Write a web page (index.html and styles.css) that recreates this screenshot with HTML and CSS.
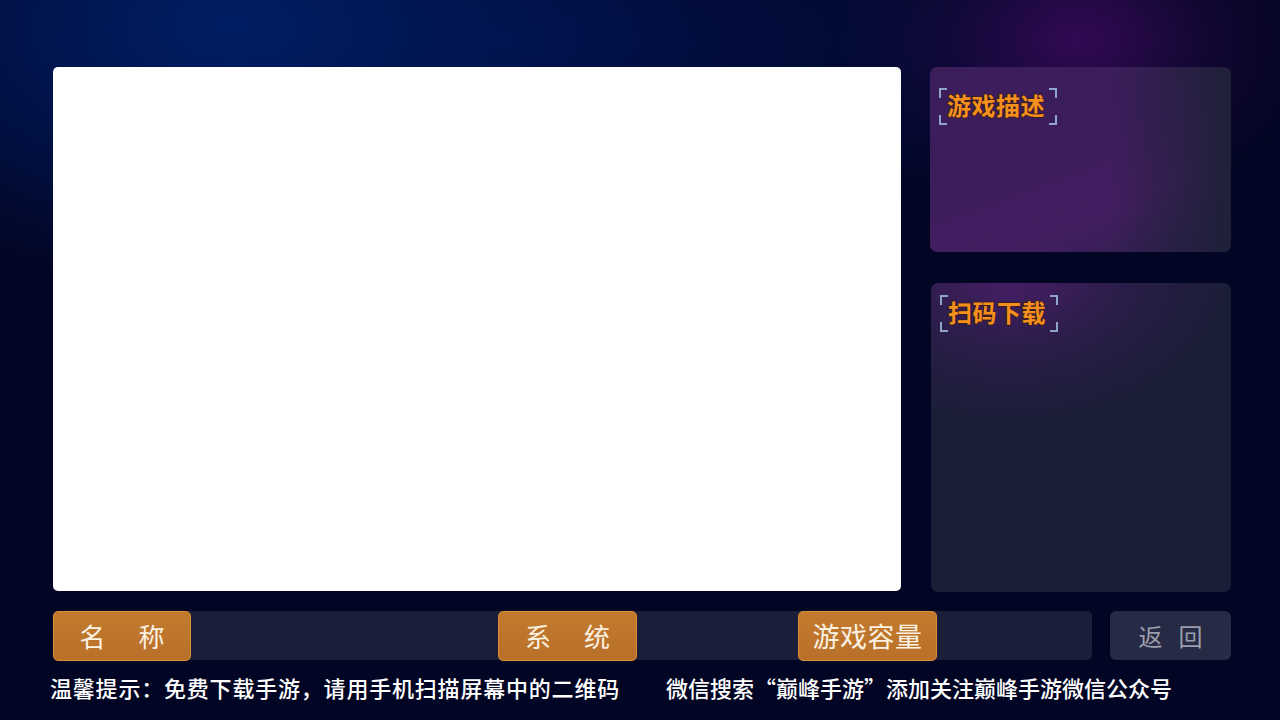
FILE: index.html
```html
<!DOCTYPE html>
<html lang="zh-CN">
<head>
<meta charset="utf-8">
<title>游戏详情</title>
<link rel="stylesheet" href="styles.css">
</head>
<body>
<div class="screen">
  <div class="main">
    <div class="preview"></div>
    <div class="side">
      <section class="card card-desc">
        <div class="title"><span class="c tl"></span><span class="c tr"></span><span class="c bl"></span><span class="c br"></span>游戏描述</div>
      </section>
      <section class="card card-qr">
        <div class="title"><span class="c tl"></span><span class="c tr"></span><span class="c bl"></span><span class="c br"></span>扫码下载</div>
      </section>
    </div>
  </div>
  <div class="infobar">
    <div class="bar">
      <div class="seg seg-name"><div class="tag tag-spaced">名<span class="sp"></span>称</div></div>
      <div class="seg seg-sys"><div class="tag tag-spaced">系<span class="sp"></span>统</div></div>
      <div class="seg seg-size"><div class="tag tag-wide">游戏容量</div></div>
    </div>
    <div class="back">返<span class="sp2"></span>回</div>
  </div>
  <div class="footer">
    <span class="tip1">温馨提示：免费下载手游，请用手机扫描屏幕中的二维码</span>
    <span class="tip2">微信搜索“巅峰手游”添加关注巅峰手游微信公众号</span>
  </div>
</div>
</body>
</html>
```
FILE: styles.css
```css
html, body {
  margin: 0;
  padding: 0;
}
body {
  width: 1280px;
  height: 720px;
  overflow: hidden;
  font-family: "Noto Sans CJK SC", "Noto Sans", sans-serif;
  background: #020523;
}
.screen {
  width: 1280px;
  height: 720px;
  box-sizing: border-box;
  padding: 67px 48px 0 53px;
  background:
    radial-gradient(ellipse 240px 170px at 1080px 40px, rgba(62, 10, 92, 0.8), rgba(38, 8, 68, 0.4) 55%, rgba(20, 5, 50, 0) 100%),
    radial-gradient(ellipse 460px 280px at 230px 25px, rgba(0, 32, 105, 0.9), rgba(0, 25, 90, 0.55) 55%, rgba(0, 10, 60, 0) 100%),
    radial-gradient(ellipse 720px 220px at 520px 40px, rgba(0, 20, 85, 0.7), rgba(0, 10, 60, 0) 100%),
    #020523;
}
.main {
  display: grid;
  grid-template-columns: 848px 301px;
  column-gap: 29px;
  height: 525px;
}
.preview {
  background: #ffffff;
  border-radius: 5px;
  height: 524px;
}
.side {
  display: flex;
  flex-direction: column;
  gap: 31px;
}
.card {
  border-radius: 7px;
  padding: 21px 0 0 9px;
  box-sizing: border-box;
}
.card-desc {
  height: 185px;
  background:
    linear-gradient(90deg, rgba(62, 31, 92, 0) 0%, rgba(62, 31, 92, 0) 60%, rgba(30, 32, 56, 1) 100%),
    linear-gradient(160deg, #3a1e5a 0%, #3c1d5c 40%, #431e60 70%, #2d1f4e 100%);
}
.card-qr {
  height: 309px;
  margin-left: 1px;
  padding-top: 12px;
  background:
    radial-gradient(ellipse 220px 150px at 80px -10px, rgba(80, 30, 110, 0.85), rgba(60, 28, 95, 0.4) 55%, rgba(28, 30, 56, 0) 100%),
    #1b1e37;
}
.title {
  position: relative;
  display: inline-block;
  height: 37px;
  line-height: 34px;
  padding: 0 12px 0 8px;
  font-size: 24px;
  font-weight: 700;
  color: #f5901c;
  letter-spacing: 0.5px;
  text-shadow: 0 1px 0 #3a1c22, 1px 0 0 #3a1c22, -1px 0 0 #3a1c22, 0 -1px 0 #3a1c22;
}
.c {
  position: absolute;
  width: 6px;
  height: 8px;
  border-color: #8ea5c9;
  border-style: solid;
  border-width: 0;
}
.tl { left: 0; top: 0; border-left-width: 2px; border-top-width: 2px; }
.tr { right: 0; top: 0; border-right-width: 2px; border-top-width: 2px; }
.bl { left: 0; bottom: 0; border-left-width: 2px; border-bottom-width: 2px; }
.br { right: 0; bottom: 0; border-right-width: 2px; border-bottom-width: 2px; }

.infobar {
  display: flex;
  gap: 18px;
  margin-top: 19px;
  height: 49px;
}
.bar {
  width: 1039px;
  height: 49px;
  background: #1b1e38;
  border-radius: 5px;
  display: flex;
}
.seg {
  height: 49px;
}
.seg-name { width: 445px; }
.seg-sys { width: 300px; }
.seg-size { width: 294px; }
.tag {
  box-sizing: border-box;
  width: 139px;
  height: 50px;
  border: 1px solid #d98d34;
  border-radius: 5px;
  background: linear-gradient(180deg, #c27a2e 0%, #b9712a 100%);
  color: #fbf1e2;
  font-size: 26px;
  font-weight: 400;
  line-height: 47px;
  text-align: center;
}
.tag-wide {
  font-size: 27px;
  letter-spacing: 0.5px;
}
.seg-name .tag { width: 138px; }
.sp {
  display: inline-block;
  width: 33px;
}
.back {
  width: 121px;
  height: 49px;
  background: #262a44;
  border-radius: 6px;
  color: #9c9eae;
  font-size: 24px;
  font-weight: 400;
  line-height: 49px;
  text-align: center;
}
.sp2 {
  display: inline-block;
  width: 16px;
}
.footer {
  display: flex;
  margin-top: 11px;
  margin-left: -3px;
  color: #ffffff;
  font-size: 22px;
  font-weight: 500;
  line-height: 32px;
  white-space: nowrap;
}
.tip1 {
  letter-spacing: 0.8px;
}
.tip2 {
  margin-left: 46px;
}
```
